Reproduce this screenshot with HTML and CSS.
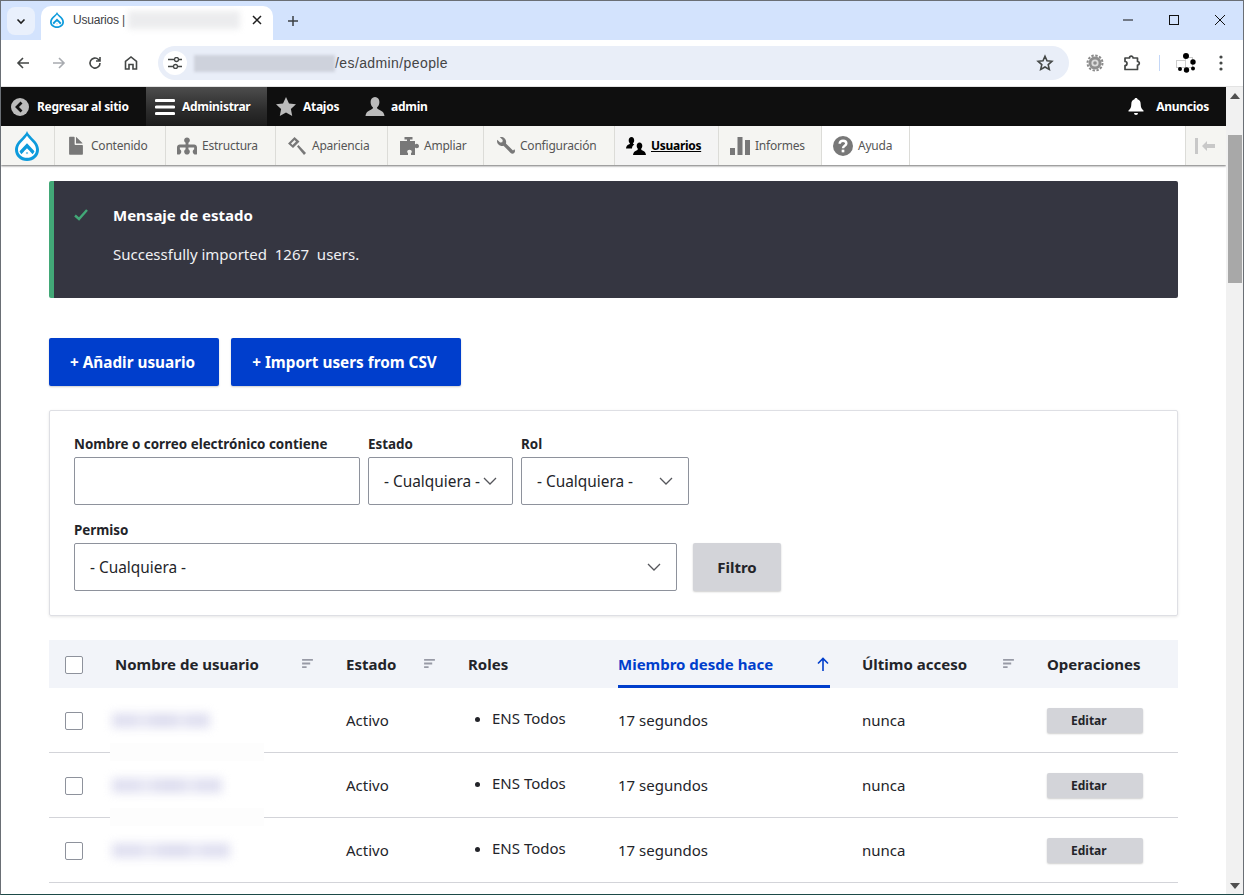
FILE: index.html
```html
<!DOCTYPE html>
<html lang="es">
<head>
<meta charset="utf-8">
<title>Usuarios</title>
<link rel="stylesheet" href="styles.css">
</head>
<body>
<div class="window">
  <header class="tabstrip">
    <button class="tab-search"><svg width="12" height="12" viewBox="0 0 12 12"><path d="M2.5 4.5 6 8l3.5-3.5" fill="none" stroke="#1f1f1f" stroke-width="1.6"/></svg></button>
    <div class="tab">
      <svg class="tab-icon" width="14" height="16" viewBox="0 0 24 28" preserveAspectRatio="none"><use href="#drop"/></svg>
      <span class="tab-title">Usuarios |</span>
      <span class="tab-blur"></span>
      <svg class="tab-close" width="10" height="10" viewBox="0 0 10 10"><path d="M1 1l8 8M9 1l-8 8" stroke="#1f1f1f" stroke-width="1.5"/></svg>
    </div>
    <svg class="new-tab" width="12" height="12" viewBox="0 0 12 12"><path d="M6 1v10M1 6h10" stroke="#3c4043" stroke-width="1.5"/></svg>
    <div class="win-controls">
      <svg width="12" height="12" viewBox="0 0 12 12"><path d="M1 6h10" stroke="#111" stroke-width="1"/></svg>
      <svg width="12" height="12" viewBox="0 0 12 12"><rect x="1.5" y="1.5" width="9" height="9" fill="none" stroke="#111"/></svg>
      <svg width="12" height="12" viewBox="0 0 12 12"><path d="M1 1l10 10M11 1 1 11" stroke="#111"/></svg>
    </div>
  </header>

  <nav class="browserbar">
    <svg class="nav-icon" width="16" height="16" viewBox="0 0 16 16"><path d="M14 8H3M8 3 3 8l5 5" fill="none" stroke="#444746" stroke-width="1.6"/></svg>
    <svg class="nav-icon" width="16" height="16" viewBox="0 0 16 16"><path d="M2 8h11M8 3l5 5-5 5" fill="none" stroke="#a8abb0" stroke-width="1.6"/></svg>
    <svg class="nav-icon" width="16" height="16" viewBox="0 0 16 16"><path d="M13 8a5 5 0 1 1-1.5-3.5L13 6M13 2v4H9" fill="none" stroke="#444746" stroke-width="1.6"/></svg>
    <svg class="nav-icon" width="16" height="16" viewBox="0 0 16 16"><path d="M2.500 14V6.500L8 2l5.500 4.500V14H10V9.500H6V14z" fill="none" stroke="#444746" stroke-width="1.6"/></svg>
    <div class="omnibox">
      <span class="site-btn"><svg width="14" height="12" viewBox="0 0 14 12"><path d="M0 2.500h6M10 9.500h4M0 9.500h5M11 2.500h3" stroke="#444746" stroke-width="1.300"/><circle cx="8.500" cy="2.500" r="2" fill="none" stroke="#444746" stroke-width="1.300"/><circle cx="7.500" cy="9.500" r="2" fill="none" stroke="#444746" stroke-width="1.300"/></svg></span>
      <span class="url-blur"></span>
      <span class="url">/es/admin/people</span>
      <svg class="star" width="18" height="18" viewBox="0 0 18 18"><path d="M9 2.300l2 4.500 4.900.5-3.700 3.300 1.100 4.800L9 13l-4.300 2.400 1.100-4.800-3.700-3.300 4.900-.5z" fill="none" stroke="#444746" stroke-width="1.600"/></svg>
    </div>
    <svg class="ext-gear" width="18" height="18" viewBox="0 0 18 18"><circle cx="9" cy="9" r="7.500" fill="none" stroke="#8a8a8a" stroke-width="2" stroke-dasharray="2.400 1.530"/><circle cx="9" cy="9" r="6.500" fill="#8f8f8f"/><circle cx="9" cy="9" r="3.600" fill="#dcdcdc"/><circle cx="9" cy="9" r="1.800" fill="#8f8f8f"/></svg>
    <svg class="ext-puzzle" width="18" height="18" viewBox="0 0 18 18"><path d="M2 4h4.500a1.800 1.800 0 0 1 3.600 0h4.400v3.500a1.800 1.800 0 0 1 0 3.600v4.400H2v-4a2 2 0 0 0 0-4z" fill="none" stroke="#444746" stroke-width="1.700" stroke-linejoin="round"/></svg>
    <span class="bar-sep"></span>
    <svg class="avatar" width="22" height="22" viewBox="0 0 22 22"><rect x=".5" y="8.500" width="9" height="7" fill="#fff" stroke="#ccc"/><rect x="9.500" y="5.500" width="7" height="10" fill="#fff" stroke="#ccc"/><circle cx="10" cy="4" r="3"/><circle cx="17" cy="10" r="2.700"/><circle cx="4" cy="17" r="2"/><circle cx="10.500" cy="18" r="2.700"/><circle cx="17" cy="16.500" r="2"/></svg>
    <svg class="menu-dots" width="4" height="16" viewBox="0 0 4 16"><circle cx="2" cy="2" r="1.600" fill="#444746"/><circle cx="2" cy="8" r="1.600" fill="#444746"/><circle cx="2" cy="14" r="1.600" fill="#444746"/></svg>
  </nav>

  <div class="viewport">
    <div class="page">
      <div class="adminbar">
        <a class="bar-item bar-back"><svg width="20" height="20" viewBox="0 0 20 20"><circle cx="10" cy="10" r="9" fill="#bbb"/><path d="M11.500 5.500 7 10l4.500 4.500" fill="none" stroke="#111" stroke-width="2.800"/></svg>Regresar al sitio</a>
        <a class="bar-item bar-admin"><svg width="20" height="18" viewBox="0 0 20 18"><path d="M1.500 2.500h17M1.500 9h17M1.500 15.500h17" stroke="#fff" stroke-width="3.200" stroke-linecap="round"/></svg>Administrar</a>
        <a class="bar-item bar-short"><svg width="20" height="19" viewBox="0 0 20 19"><path d="M10 0l3 6.400 7 .9-5.100 4.800 1.300 6.900L10 15.600 3.800 19l1.300-6.900L0 7.300l7-.9z" fill="#bbb"/></svg>Atajos</a>
        <a class="bar-item bar-user"><svg width="20" height="20" viewBox="0 0 20 20"><path d="M10 0c2.800 0 4.400 2.200 4.400 5 0 2.300-1 4.400-2.300 5.300-.3 1.200.6 1.700 2.500 2.600 2.600 1.100 4.400 2.300 4.900 6.100H.5c.5-3.800 2.300-5 4.900-6.100 1.900-.9 2.800-1.400 2.500-2.600C6.600 9.400 5.600 7.300 5.600 5 5.600 2.200 7.200 0 10 0z" fill="#bbb"/></svg>admin</a>
        <a class="bar-item bar-news"><svg width="16" height="17" viewBox="0 0 16 17"><path d="M8 0c1 0 1.500.6 1.500 1.300 2.300.6 3.200 2.600 3.200 5 0 3 .9 4.700 2.800 6.200v1H.5v-1c1.900-1.500 2.800-3.200 2.800-6.200 0-2.400.9-4.400 3.200-5C6.500.6 7 0 8 0zM6 15h4a2 2 0 0 1-4 0z" fill="#fff"/></svg>Anuncios</a>
      </div>

      <div class="tray">
        <a class="tray-logo"><svg width="24" height="30" viewBox="0 0 24 28" preserveAspectRatio="none"><use href="#drop"/></svg></a>
        <a class="tray-item"><svg viewBox="1.500 .5 13 14.500"><path d="M12.502 7h-5c-.276 0-.502-.225-.502-.5v-5c0-.275-.225-.5-.5-.5h-3c-.275 0-.5.225-.5.500v12.029c0 .275.225.500.500.500h9.002c.275 0 .5-.225.500-.5v-6.029c0-.275-.225-.5-.5-.5zM8.502 6h4c.275 0 .34-.159.146-.354l-4.293-4.292c-.195-.195-.353-.129-.353.146v4c0 .275.225.5.5.5z"/></svg>Contenido</a>
        <a class="tray-item"><svg viewBox="1 2 14 14"><path d="M15.002 11.277v-1.277c0-1.104-.896-2-2-2h-4v-1.230c.597-.347 1-.985 1-1.723 0-1.104-.896-2-2-2s-2 .896-2 2c0 .738.403 1.376 1 1.723v1.230h-4c-1.104 0-2 .896-2 2v1.277c-.596.347-1 .984-1 1.723 0 1.104.896 2 2 2s2-.896 2-2c0-.738-.404-1.376-1-1.723v-1.277h4v1.277c-.596.347-1 .984-1 1.723 0 1.104.896 2 2 2s2-.896 2-2c0-.738-.404-1.376-1-1.723v-1.277h4v1.277c-.596.347-1 .984-1 1.723 0 1.104.896 2 2 2s2-.896 2-2c0-.739-.404-1.376-1-1.723z"/></svg>Estructura</a>
        <a class="tray-item"><svg viewBox="0 0 20 20"><path d="M7.500 1 1 7.500l5 4.500 6.500-6.500zM7.500 4 4 7.500 5.500 9 9 5.500z" fill-rule="evenodd"/><path d="M10 10.500l1.500-1.500 7.500 8-2 2z"/></svg>Apariencia</a>
        <a class="tray-item"><svg viewBox="0 0 20 18"><path d="M5.500 0h8v2.500h-2.500V4h5v3.500c.5-.5 1-.8 1.700-.8 1.300 0 2.300 1 2.300 2.300s-1 2.300-2.300 2.300c-.7 0-1.200-.3-1.700-.8V18h-4v-1.700c.5-.4.800-1 .8-1.600 0-1.100-1-1.900-2.300-1.900s-2.300.8-2.300 1.900c0 .6.300 1.200.8 1.600V18H1V4h7V2.500H5.500z"/></svg>Ampliar</a>
        <a class="tray-item"><svg viewBox="0 0 16 16"><path d="M14.416 11.586l-.01-.008v-.001l-5.656-5.656c.421-1.378.086-2.931-1.004-4.020-1.065-1.065-2.570-1.416-3.929-1.050l2.372 2.372-.351 1.710-1.709.351-2.372-2.372c-.366 1.360-.016 2.864 1.050 3.929 1.089 1.090 2.642 1.425 4.020 1.004l.062.062.51.51.01.01 5.097 5.097c.78.78 2.048.78 2.828 0l.08-.08c.781-.781.781-2.048.002-2.828z"/></svg>Configuración</a>
        <a class="tray-item is-active"><svg viewBox="0 0 20 18"><path d="M5.500 0c1.700 0 2.700 1.400 2.700 3.200 0 1.300-.5 2.500-1.200 3 .1.800.6 1 1.300 1.300-.9.500-1.500 1.100-2 2.300-.2.600-.3 1.200-.3 1.800H0c.2-2.300 1.100-3.400 2.700-4.100.9-.4 1.200-.7 1.200-1.300-.8-.6-1.200-1.800-1.200-3C2.700 1.400 3.800 0 5.500 0zM13.500 5.500c1.700 0 2.800 1.400 2.800 3.300 0 1.300-.5 2.500-1.200 3 0 .9.400 1.300 1.500 1.800 2 .8 3 1.600 3.400 4.400H7c.4-2.800 1.400-3.600 3.400-4.400 1.100-.5 1.500-.9 1.500-1.800-.7-.5-1.200-1.700-1.200-3 0-1.900 1.100-3.300 2.800-3.300z"/></svg><span>Usuarios</span></a>
        <a class="tray-item"><svg viewBox="0 0 20 18"><path d="M0 11h5v7H0zM7.500 0h5v18h-5zM15 3h5v15h-5z"/></svg>Informes</a>
        <a class="tray-item is-help"><svg viewBox="0 0 18 18"><circle cx="9" cy="9" r="9"/><path d="M6 7c0-1.800 1.300-2.700 3-2.700S12 5.300 12 6.800c0 2-3 2-3 4.200" fill="none" stroke="#fff" stroke-width="2.200"/><rect x="7.800" y="12.300" width="2.400" height="2.400" fill="#fff"/></svg>Ayuda</a>
        <span class="tray-fill"></span>
        <a class="tray-toggle"><svg width="20" height="16" viewBox="0 0 20 16"><path d="M0 0h3v16H0zM7 8l5-5v3h8v4h-8v3z" fill="#c8c8c8"/></svg></a>
      </div>

      <main class="content">
        <section class="status">
          <svg class="status-check" width="14" height="12" viewBox="0 0 14 12"><path d="M1 6.500 5 10l8-9" fill="none" stroke="#42a877" stroke-width="2.400"/></svg>
          <div>
            <h2 class="status-title">Mensaje de estado</h2>
            <p class="status-text">Successfully imported&nbsp; 1267&nbsp; users.</p>
          </div>
        </section>

        <div class="actions">
          <a class="btn-primary">+ Añadir usuario</a>
          <a class="btn-primary">+ Import users from CSV</a>
        </div>

        <form class="filters">
          <div class="filter-row">
            <label class="field"><span class="field-label">Nombre o correo electrónico contiene</span><input class="input w-name" type="text"></label>
            <label class="field"><span class="field-label">Estado</span><select class="input select w-state"><option>- Cualquiera -</option></select></label>
            <label class="field"><span class="field-label">Rol</span><select class="input select w-role"><option>- Cualquiera -</option></select></label>
          </div>
          <div class="filter-row row-2">
            <label class="field"><span class="field-label">Permiso</span><select class="input select w-perm"><option>- Cualquiera -</option></select></label>
            <button class="btn-filter" type="button">Filtro</button>
          </div>
        </form>

        <table class="users">
          <colgroup><col class="c1"><col class="c2"><col class="c3"><col class="c4"><col class="c5"><col class="c6"><col class="c7"></colgroup>
          <thead>
            <tr>
              <th><input class="check" type="checkbox"></th>
              <th><span class="th-in">Nombre de usuario<svg class="sort" width="11" height="9" viewBox="0 0 12 10"><path d="M0 0h12v2H0zM0 4h9v2H0zM0 8h5v2H0z"/></svg></span></th>
              <th><span class="th-in">Estado<svg class="sort" width="11" height="9" viewBox="0 0 12 10"><path d="M0 0h12v2H0zM0 4h9v2H0zM0 8h5v2H0z"/></svg></span></th>
              <th>Roles</th>
              <th class="th-active"><span class="th-in">Miembro desde hace<svg class="sort-up" width="12" height="14" viewBox="0 0 12 14"><path d="M6 14V1.500M1 6.500l5-5 5 5" fill="none" stroke="#003ecc" stroke-width="1.600"/></svg></span></th>
              <th><span class="th-in">Último acceso<svg class="sort" width="11" height="9" viewBox="0 0 12 10"><path d="M0 0h12v2H0zM0 4h9v2H0zM0 8h5v2H0z"/></svg></span></th>
              <th>Operaciones</th>
            </tr>
          </thead>
          <tbody>
            <tr>
              <td><input class="check" type="checkbox"></td>
              <td class="name-cell"><span class="patch"></span><span class="name-blur n1"></span></td>
              <td>Activo</td>
              <td><ul class="roles"><li>ENS Todos</li></ul></td>
              <td>17 segundos</td>
              <td>nunca</td>
              <td><a class="btn-small">Editar</a></td>
            </tr>
            <tr>
              <td><input class="check" type="checkbox"></td>
              <td class="name-cell"><span class="patch"></span><span class="name-blur n2"></span></td>
              <td>Activo</td>
              <td><ul class="roles"><li>ENS Todos</li></ul></td>
              <td>17 segundos</td>
              <td>nunca</td>
              <td><a class="btn-small">Editar</a></td>
            </tr>
            <tr>
              <td><input class="check" type="checkbox"></td>
              <td class="name-cell"><span class="name-blur n3"></span></td>
              <td>Activo</td>
              <td><ul class="roles"><li>ENS Todos</li></ul></td>
              <td>17 segundos</td>
              <td>nunca</td>
              <td><a class="btn-small">Editar</a></td>
            </tr>
          </tbody>
        </table>
      </main>
    </div>

    <aside class="scrollbar">
      <svg width="10" height="6" viewBox="0 0 10 6"><path d="M5 0l5 6H0z" fill="#505050"/></svg>
      <span class="thumb"></span>
      <svg class="arrow-down" width="10" height="6" viewBox="0 0 10 6"><path d="M5 6 0 0h10z" fill="#505050"/></svg>
    </aside>
  </div>
</div>

<svg class="defs" width="0" height="0">
  <symbol id="drop" viewBox="0 0 24 28" preserveAspectRatio="none">
    <path d="M12 0c1 2.500 3 4.300 5 6.200 3.300 3 7 6.300 7 11.300C24 23.500 18.600 28 12 28S0 23.500 0 17.500c0-5 3.700-8.300 7-11.300C9 4.300 11 2.500 12 0z" fill="#0d9bdc"/>
    <path d="M12 4.500c1 1.600 2.400 2.900 3.800 4.200 2.500 2.300 5.200 4.800 5.200 8.800 0 4.300-4 7.500-9 7.500s-9-3.200-9-7.500c0-4 2.700-6.500 5.200-8.800C9.600 7.400 11 6.100 12 4.500z" fill="#fff"/>
    <path d="M12 11.500l7.500 7.500c-.4 1-1 1.900-1.900 2.700L12 16.200l-5.600 5.500c-.9-.8-1.500-1.700-1.900-2.700z" fill="#0d9bdc"/>
    <path d="M12 17.500c1.700 0 3.100 1.400 3.100 3s-1.400 3-3.100 3-3.100-1.400-3.100-3 1.400-3 3.100-3z" fill="#fff"/>
    <path d="M12 19.500c.7 0 1.200.5 1.200 1.100s-.5 1.100-1.200 1.100-1.200-.5-1.200-1.100.5-1.100 1.200-1.100z" fill="#7cc9ec"/>
  </symbol>
</svg>
</body>
</html>
```

FILE: styles.css
```css
* { box-sizing: border-box; }
html, body { margin: 0; height: 100%; overflow: hidden; background: #fff; }
body { font-family: "Noto Sans", "Open Sans", sans-serif; color: #232429; }
a { text-decoration: none; }
.defs { position: absolute; }

.window {
  height: 895px; display: flex; flex-direction: column;
  border: 1px solid #6a6f75; border-bottom-color: #1d4a48;
}

/* Browser chrome */
.tabstrip { height: 39px; background: #d3e3fd; display: flex; align-items: flex-end; flex: none; }
.tab-search {
  width: 28px; height: 28px; margin: 0 0 5px 6px; border: 0; border-radius: 8px;
  background: #e9f0fc; display: flex; align-items: center; justify-content: center; padding: 0;
}
.tab {
  width: 232px; height: 34px; margin-left: 6px; background: #fff; border-radius: 10px 10px 0 0;
  display: flex; align-items: center; padding: 0 0 6px 9px; position: relative;
}
.tab-icon { flex: none; }
.tab-title { font-family: "Liberation Sans", sans-serif; font-size: 12px; letter-spacing: -.2px; color: #3c4043; margin-left: 9px; white-space: nowrap; }
.tab-blur { width: 112px; height: 18px; margin-left: 3px; background: #dfe0e3; filter: blur(3px); opacity: .6; }
.tab-close { margin-left: auto; margin-right: 11px; }
.new-tab { margin: 0 0 13px 14px; }
.win-controls { margin-left: auto; display: flex; gap: 34px; padding: 0 17px 14px 0; }

.browserbar { height: 47px; background: #fff; flex: none; display: flex; align-items: center; padding: 0 0 0 14px; border-bottom: 1px solid #e3e3e3; }
.nav-icon { flex: none; margin-right: 20px; }
.omnibox {
  height: 34px; width: 911px; margin-left: -1px; background: #e9eef8; border-radius: 17px;
  display: flex; align-items: center; padding-left: 5px; flex: none;
}
.site-btn { width: 24px; height: 24px; border-radius: 50%; background: #fff; display: flex; align-items: center; justify-content: center; flex: none; }
.url-blur { width: 141px; height: 17px; margin-left: 7px; background: #ced2dc; filter: blur(1.500px); flex: none; }
.url { font-family: "Liberation Sans", sans-serif; font-size: 14px; color: #444; letter-spacing: .4px; }
.star { margin-left: auto; margin-right: 15px; }
.ext-gear { margin-left: 17px; flex: none; }
.ext-puzzle { margin-left: 19px; flex: none; }
.bar-sep { width: 1px; height: 16px; background: #c4d7f7; margin-left: 18px; flex: none; }
.avatar { margin-left: 16px; flex: none; }
.menu-dots { margin-left: 21px; flex: none; }

.viewport { flex: 1; display: flex; min-height: 0; }
.page { flex: 1; min-width: 0; overflow: hidden; }
.scrollbar { width: 17px; flex: none; background: #f1f1f1; display: flex; flex-direction: column; align-items: center; padding: 6px 0 5px; position: relative; }
.thumb { width: 14px; height: 148px; background: #a8a8a8; margin-top: 36px; }
.arrow-down { margin-top: auto; }

/* Drupal admin bar */
.adminbar { height: 39px; background: #0f0f0f; display: flex; }
.bar-item {
  display: flex; align-items: center; gap: 7px; color: #fff; font-size: 12px; font-weight: 700;
  letter-spacing: -.28px; text-shadow: 0 1px 0 rgba(0,0,0,.5); white-space: nowrap;
}
.bar-back { width: 145px; padding-left: 9px; gap: 7px; }
.bar-admin { width: 121px; padding-left: 9px; gap: 7px; background: linear-gradient(#4d4d4d, #2c2c2c 60%, #1d1d1d); }
.bar-short { padding-left: 9px; gap: 7px; width: 88px; }
.bar-user { padding-left: 10px; gap: 6px; width: 100px; }
.bar-news { margin-left: auto; padding-right: 17px; gap: 12px; }

.tray {
  height: 39px; background: #fff; display: grid;
  grid-template-columns: 54px 111px 110px 112px 96px 131px 104px 103px 88px 1fr 41px;
  box-shadow: 0 1px 2px rgba(0,0,0,.55); position: relative;
}
.tray-logo, .tray-item { background: #f5f5f2; border-right: 1px solid #dcdcd8; display: flex; align-items: center; }
.tray-logo { justify-content: center; padding-right: 1px; padding-top: 1px; }
.tray-item { padding-left: 11px; gap: 5px; font-size: 12px; letter-spacing: -.22px; color: #565656; white-space: nowrap; }
.tray-item svg { width: 20px; height: 20px; fill: #787878; flex: none; }
.tray-item.is-active { background: #f4f4f4; color: #000; font-weight: 700; letter-spacing: -.3px; }
.tray-item.is-active svg { fill: #000; }
.tray-item.is-active span { text-decoration: underline; }
.tray-item.is-help { background: #fff; }
.tray-toggle { background: #f5f5f2; border-left: 1px solid #dcdcd8; display: flex; align-items: center; justify-content: center; }
.tray-toggle svg { margin-left: -2px; }

/* Content */
.content { padding: 16px 48px 0 48px; }
.status {
  height: 117px; background: #353641; border-left: 5px solid #42a877; border-radius: 2px;
  color: #fff; display: flex; padding: 24px 0 0 20px; gap: 25px;
}
.status-check { margin-top: 4px; flex: none; }
.status-title { margin: 0; font-size: 15px; line-height: 20px; font-weight: 700; }
.status-text { margin: 19px 0 0; font-size: 15px; line-height: 20px; color: #f0f0f3; }

.actions { display: flex; gap: 12px; margin-top: 40px; }
.btn-primary {
  height: 48px; display: flex; align-items: center; padding: 0 24px 0 21px; background: #003ecc; color: #fff;
  border-radius: 2px; font-size: 15.300px; font-weight: 700; box-shadow: 0 1px 2px rgba(0,0,0,.2);
}

.filters {
  margin-top: 24px; height: 206px; border: 1px solid #dedfe4; border-radius: 2px;
  box-shadow: 0 1px 3px rgba(0,0,0,.1); padding: 24px 24px 0 24px;
}
.filter-row { display: flex; gap: 8px; }
.row-2 { margin-top: 16px; align-items: flex-end; gap: 16px; }
.field { display: block; }
.field-label { display: block; font-size: 13.400px; line-height: 18px; font-weight: 700; margin-bottom: 4px; white-space: nowrap; }
.input {
  display: block; height: 48px; border: 1px solid #8e929c; border-radius: 2px; background: #fff;
  font-family: inherit; font-size: 15px; color: #232429; padding: 0 15px; margin: 0;
}
.select {
  appearance: none; -webkit-appearance: none; padding-right: 16px; font-size: 15.400px;
  background: #fff url("data:image/svg+xml,%3Csvg xmlns='http://www.w3.org/2000/svg' width='14' height='9' viewBox='0 0 14 9'%3E%3Cpath d='M1 1l6 6 6-6' fill='none' stroke='%2355565b' stroke-width='1.300'/%3E%3C/svg%3E") no-repeat right 15px top 19px;
}
.w-name { width: 286px; }
.w-state { width: 145px; }
.w-role { width: 168px; }
.w-perm { width: 603px; }
.btn-filter {
  width: 88px; height: 48px; border: 0; border-radius: 2px; background: #d3d4d9; color: #232429;
  font-family: inherit; font-size: 15px; font-weight: 700; box-shadow: 0 1px 2px rgba(0,0,0,.2);
}

.users { margin-top: 24px; width: 1129px; border-collapse: separate; border-spacing: 0; table-layout: fixed; font-size: 15px; }
.c1 { width: 50px; } .c2 { width: 231px; } .c3 { width: 122px; } .c4 { width: 150px; }
.c5 { width: 244px; } .c6 { width: 185px; } .c7 { width: 147px; }
.users th { height: 48px; padding: 0 16px; background: #f2f4f9; text-align: left; font-weight: 700; white-space: nowrap; }
.users td { height: 65px; padding: 0 16px; border-bottom: 1px solid #d3d4d9; white-space: nowrap; }
.th-in { display: flex; align-items: center; justify-content: space-between; }
.sort { fill: #989aa6; margin: -1px 1px 0 0; }
.sort-up { margin-right: 1px; }
.th-active { position: relative; color: #003ecc; }
.th-active::after { content: ""; position: absolute; left: 16px; right: 16px; bottom: 0; height: 3px; background: #003ecc; }
.check {
  appearance: none; -webkit-appearance: none; display: block; width: 18px; height: 18px; margin: 2px 0 0;
  border: 1px solid #8e929c; border-radius: 2px; background: #fff;
}
.name-cell { position: relative; }
.patch { position: absolute; left: 11px; width: 154px; bottom: -9px; height: 18px; background: #fdfdfd; z-index: 1; }
.name-blur {
  display: block; height: 15px; margin: 0 0 0 -3px; filter: blur(5px); opacity: .75;
  background: linear-gradient(90deg, #d6d6ec 0 22%, #e3e3f2 30%, #d3d3ea 45% 62%, #e3e3f2 70%, #d6d6ec 80% 100%);
}
.n1 { width: 98px; } .n2 { width: 110px; } .n3 { width: 118px; }
.roles { margin: 0 0 4px; padding: 0 0 0 24px; }
.btn-small {
  display: flex; align-items: center; width: 96px; height: 25px; padding-left: 24px;
  background: #d3d4d9; color: #232429; font-size: 12px; font-weight: 700; border-radius: 2px;
  box-shadow: 0 1px 2px rgba(0,0,0,.2);
}
```
